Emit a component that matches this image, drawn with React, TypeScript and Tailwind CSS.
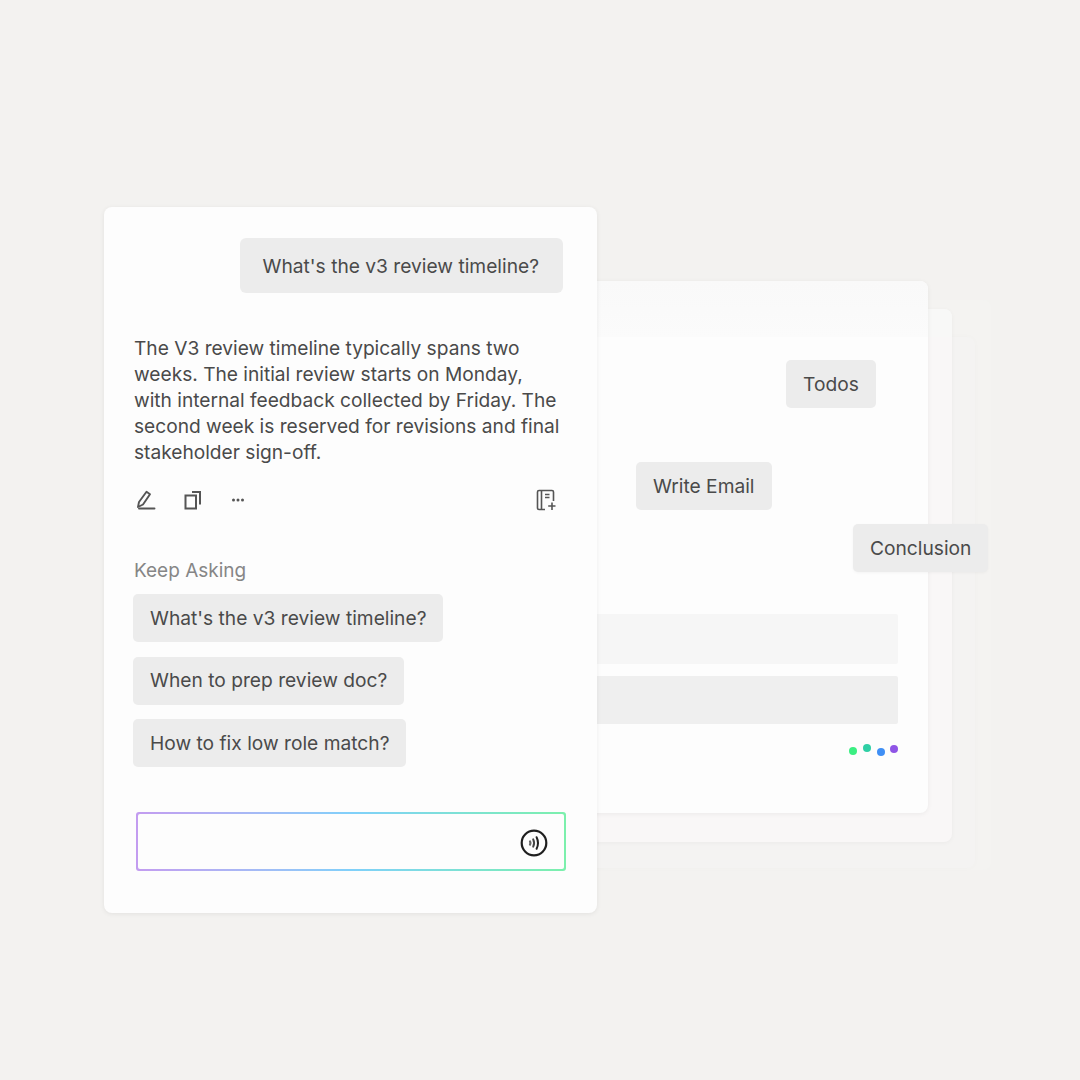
const followUps = [
  "What's the v3 review timeline?",
  "When to prep review doc?",
  "How to fix low role match?",
];

function Chip({ children, className = "" }: { children: React.ReactNode; className?: string }) {
  return (
    <div className={`w-fit rounded-[5px] bg-[#ececec] px-[17px] h-[48px] flex items-center whitespace-nowrap text-[19.2px] text-[#4a4a4a] ${className}`}>
      {children}
    </div>
  );
}

function PenIcon() {
  return (
    <svg width="22" height="22" viewBox="0 0 22 22" fill="none" stroke="#555555" strokeWidth="1.9" strokeLinejoin="round" strokeLinecap="round">
      <path d="M4 18 L5 13 L12.5 2.8 L16 5.2 L9 15.5 Z" />
      <path d="M5 19.5 H20.5" />
    </svg>
  );
}

function CopyIcon() {
  return (
    <svg width="22" height="22" viewBox="0 0 22 22" fill="none" stroke="#555555" strokeWidth="2">
      <rect x="2.5" y="6.5" width="10.5" height="13" />
      <path d="M9 3 H17 V15.5" />
    </svg>
  );
}

function DotsIcon() {
  return (
    <svg width="16" height="22" viewBox="0 0 16 22" fill="#555555">
      <circle cx="3.5" cy="11" r="1.5" />
      <circle cx="8" cy="11" r="1.5" />
      <circle cx="12.5" cy="11" r="1.5" />
    </svg>
  );
}

function NoteAddIcon() {
  return (
    <svg width="24" height="24" viewBox="0 0 24 24" fill="none" stroke="#555555" strokeWidth="1.6">
      <path d="M13 21.5 H7 Q5.5 21.5 5.5 20 V4 Q5.5 2.5 7 2.5 H20 Q21.5 2.5 21.5 4 V13" />
      <path d="M9.5 2.5 V21.5" />
      <path d="M13 6.5 H17.5 M13 9.5 H17.5" />
      <path d="M20 14.5 V22 M16.2 18 H23.5" />
    </svg>
  );
}

function VoiceIcon() {
  return (
    <svg width="28" height="28" viewBox="0 0 28 28" fill="none" stroke="#1f1f1f">
      <circle cx="14" cy="14" r="12.3" strokeWidth="2.2" />
      <path d="M10 12.4 Q10.9 14 10 15.6" strokeWidth="2.2" strokeLinecap="round" stroke="#666666" />
      <path d="M13.2 10.4 Q15 14 13.2 17.6" strokeWidth="2" strokeLinecap="round" stroke="#444444" />
      <path d="M16.6 8.2 Q19.4 14 16.6 19.8" strokeWidth="2" strokeLinecap="round" stroke="#222222" />
    </svg>
  );
}

export default function App() {
  return (
    <div className="relative h-[1080px] w-[1080px] overflow-hidden bg-[#f3f2f0] font-['Inter',sans-serif]">
      {/* stacked windows behind the chat */}
      <div className="absolute left-[600px] top-[300px] h-[570px] w-[391px] rounded-[8px] bg-[#f4f3f1]" />
      <div className="absolute left-[580px] top-[337px] h-[531px] w-[395px] rounded-[8px] bg-[#f4f3f2] shadow-[0_0_6px_rgba(0,0,0,0.02)]" />
      <div className="absolute left-[560px] top-[309px] h-[533px] w-[392px] overflow-hidden rounded-[8px] bg-[#f9f7f7] shadow-[0_1px_5px_rgba(0,0,0,0.04)]">
        <div className="h-[28px] bg-[#f8f8f7]" />
      </div>
      <div className="absolute left-[540px] top-[281px] flex h-[532px] w-[388px] flex-col overflow-hidden rounded-[8px] bg-[#fdfdfd] shadow-[0_1px_5px_rgba(0,0,0,0.06)]">
        <div className="h-[56px] bg-gradient-to-b from-[#f9f9f9] to-[#fbfbfb]" />
        <div className="mt-[277px] h-[50px] w-[358px] rounded-[2px] bg-[#f6f6f6]" />
        <div className="mt-[12px] h-[48px] w-[358px] rounded-[2px] bg-[#efefef]" />
      </div>

      <Chip className="absolute left-[786px] top-[360px]">Todos</Chip>
      <Chip className="absolute left-[636px] top-[462px]">Write Email</Chip>
      <Chip className="absolute left-[853px] top-[524px] shadow-[0_1px_3px_rgba(0,0,0,0.04)]">Conclusion</Chip>

      <div className="absolute left-[850px] top-[744px] h-[14px] w-[48px]">
        <span className="absolute left-[-1px] top-[3px] h-[8px] w-[8px] rounded-full bg-[#3bef82]" />
        <span className="absolute left-[13px] top-[0px] h-[8px] w-[8px] rounded-full bg-[#2fcfa5]" />
        <span className="absolute left-[27px] top-[4px] h-[8px] w-[8px] rounded-full bg-[#3f8ff5]" />
        <span className="absolute left-[40px] top-[1px] h-[8px] w-[8px] rounded-full bg-[#8f55e6]" />
      </div>

      {/* chat card */}
      <div className="absolute left-[104px] top-[207px] flex h-[706px] w-[493px] flex-col rounded-[8px] bg-[#fdfdfd] pl-[30px] pr-[34px] pt-[31px] shadow-[0_1px_5px_rgba(0,0,0,0.07)]">
        <div className="flex h-[55px] w-fit items-center self-end whitespace-nowrap rounded-[6px] bg-[#ececec] pl-[23px] pr-[24px] pt-[1px] text-[19.2px] text-[#4a4a4a]">
          What's the v3 review timeline?
        </div>

        <p className="mt-[42px] whitespace-nowrap text-[19.15px] leading-[26px] text-[#4a4a4a]">
          The V3 review timeline typically spans two
          <br />
          weeks. The initial review starts on Monday,
          <br />
          with internal feedback collected by Friday. The
          <br />
          second week is reserved for revisions and final
          <br />
          stakeholder sign-off.
        </p>

        <div className="mt-[23px] flex h-[24px] items-center">
          <PenIcon />
          <div className="ml-[27px]"><CopyIcon /></div>
          <div className="ml-[25px]"><DotsIcon /></div>
          <div className="ml-auto mr-[7px]"><NoteAddIcon /></div>
        </div>

        <div className="mt-[46px] text-[19px] leading-[26px] text-[#868686]">Keep Asking</div>

        <div className="-ml-[1px] mt-[10px] flex flex-col gap-[14.5px]">
          {followUps.map((q) => (
            <Chip key={q}>{q}</Chip>
          ))}
        </div>

        <div className="ml-[2px] mt-[45px] h-[59px] w-[430px] rounded-[3px] bg-gradient-to-r from-[#c39cf0] via-[#80d0fa] via-50% to-[#7cf0ac] p-[2px]">
          <div className="flex h-full items-center justify-end rounded-[2px] bg-[#fdfdfd] pr-[16px] pt-[3px]">
            <VoiceIcon />
          </div>
        </div>
      </div>
    </div>
  );
}
